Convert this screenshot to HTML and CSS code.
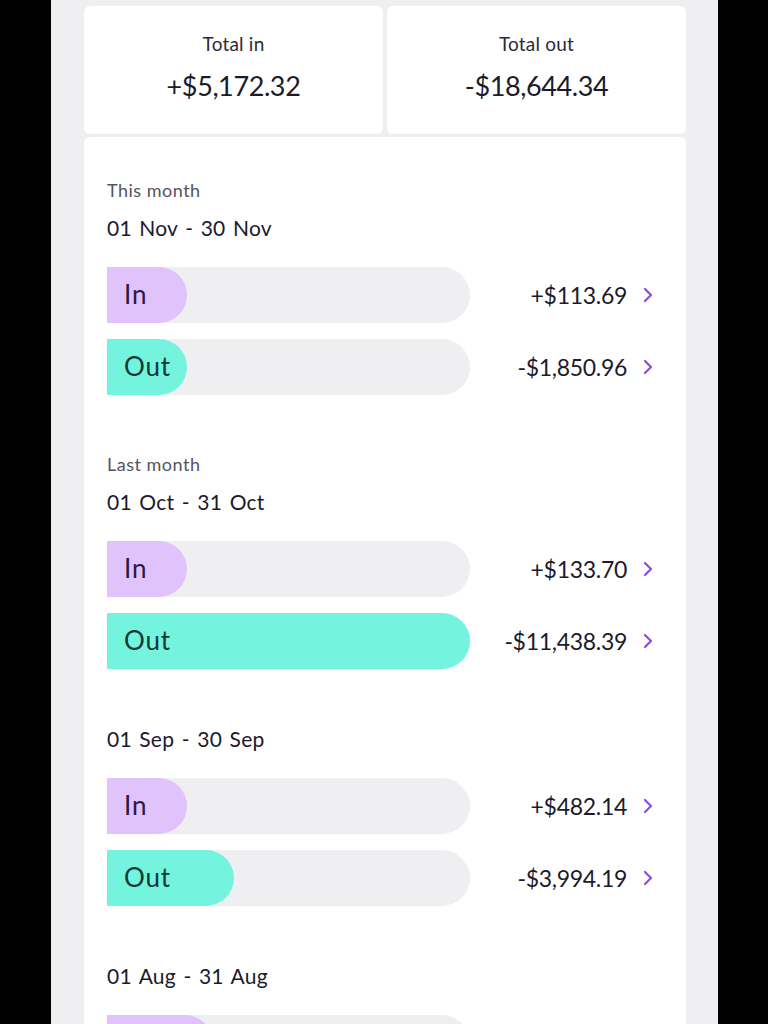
FILE: index.html
```html
<!DOCTYPE html>
<html lang="en">
<head>
  <meta charset="UTF-8">
  <meta name="viewport" content="width=device-width, initial-scale=1.0">
  <title>Money in and out</title>
  <link rel="stylesheet" href="styles.css">
</head>
<body>
  <div class="screen">
    <div class="totals">
      <div class="total-card">
        <p class="total-label">Total in</p>
        <p class="total-amount">+$5,172.32</p>
      </div>
      <div class="total-card">
        <p class="total-label">Total out</p>
        <p class="total-amount">-$18,644.34</p>
      </div>
    </div>

    <div class="months">
      <!-- November -->
      <div class="month">
        <p class="month-label">This month</p>
        <p class="month-dates">01 Nov - 30 Nov</p>
        <div class="flow-row">
          <div class="track"><div class="fill fill-in" style="width: 80px">In</div></div>
          <span class="amount">+$113.69</span>
          <svg class="chevron" viewBox="0 0 10 16"><path d="M2 2l6 6-6 6"/></svg>
        </div>
        <div class="flow-row">
          <div class="track"><div class="fill fill-out" style="width: 80px">Out</div></div>
          <span class="amount">-$1,850.96</span>
          <svg class="chevron" viewBox="0 0 10 16"><path d="M2 2l6 6-6 6"/></svg>
        </div>
      </div>

      <!-- October -->
      <div class="month">
        <p class="month-label">Last month</p>
        <p class="month-dates">01 Oct - 31 Oct</p>
        <div class="flow-row">
          <div class="track"><div class="fill fill-in" style="width: 80px">In</div></div>
          <span class="amount">+$133.70</span>
          <svg class="chevron" viewBox="0 0 10 16"><path d="M2 2l6 6-6 6"/></svg>
        </div>
        <div class="flow-row">
          <div class="track"><div class="fill fill-out" style="width: 100%">Out</div></div>
          <span class="amount">-$11,438.39</span>
          <svg class="chevron" viewBox="0 0 10 16"><path d="M2 2l6 6-6 6"/></svg>
        </div>
      </div>

      <!-- September -->
      <div class="month">
        <p class="month-dates">01 Sep - 30 Sep</p>
        <div class="flow-row">
          <div class="track"><div class="fill fill-in" style="width: 80px">In</div></div>
          <span class="amount">+$482.14</span>
          <svg class="chevron" viewBox="0 0 10 16"><path d="M2 2l6 6-6 6"/></svg>
        </div>
        <div class="flow-row">
          <div class="track"><div class="fill fill-out" style="width: 127px">Out</div></div>
          <span class="amount">-$3,994.19</span>
          <svg class="chevron" viewBox="0 0 10 16"><path d="M2 2l6 6-6 6"/></svg>
        </div>
      </div>

      <!-- August -->
      <div class="month">
        <p class="month-dates">01 Aug - 31 Aug</p>
        <div class="flow-row">
          <div class="track"><div class="fill fill-in" style="width: 106px"></div></div>
          <span class="amount"></span>
        </div>
      </div>
    </div>
  </div>
</body>
</html>
```

FILE: styles.css
```css
html, body {
  margin: 0;
  height: 100%;
  overflow: hidden;
}
body {
  background: #000;
  font-family: Lato, "Noto Sans", sans-serif;
  color: #1c1a2c;
}
p {
  margin: 0;
}
.screen {
  width: 667px;
  height: 100%;
  margin-left: 51px;
  background: #efeff2;
  padding: 6px 32px 0 33px;
  box-sizing: border-box;
}
.totals {
  display: grid;
  grid-template-columns: 299px 1fr;
  gap: 4px;
}
.total-card {
  background: #fff;
  border-radius: 6px;
  height: 128px;
  display: flex;
  flex-direction: column;
  align-items: center;
  padding-top: 25px;
  box-sizing: border-box;
}
.total-label {
  font-size: 19px;
  line-height: 26px;
  color: #2b2a35;
  letter-spacing: 0.2px;
}
.total-amount {
  font-size: 27px;
  line-height: 34px;
  margin-top: 12px;
  letter-spacing: -0.4px;
}
.months {
  background: #fff;
  border-radius: 6px 6px 0 0;
  margin-top: 3px;
  padding: 41px 33px 0 23px;
  height: 900px;
}
.month + .month {
  margin-top: 57px;
}
.month-label {
  font-size: 18px;
  line-height: 24px;
  color: #555460;
  letter-spacing: 0.5px;
  margin-bottom: 13px;
}
.month-dates {
  font-size: 21px;
  line-height: 26px;
  word-spacing: 2px;
  letter-spacing: 0.2px;
  margin-bottom: 26px;
}
.flow-row {
  display: flex;
  align-items: center;
  height: 56px;
}
.flow-row + .flow-row {
  margin-top: 16px;
}
.track {
  width: 363px;
  height: 56px;
  background: #efeff1;
  border-radius: 0 28px 28px 0;
}
.fill {
  height: 100%;
  border-radius: 0 28px 28px 0;
  box-sizing: border-box;
  padding-left: 17px;
  font-size: 26px;
  line-height: 54px;
  letter-spacing: 0.8px;
}
.fill-in {
  background: #dfc3fa;
  color: #2c1849;
}
.fill-out {
  background: #74f3de;
  color: #0f3a36;
}
.amount {
  flex: 1;
  text-align: right;
  font-size: 23px;
  letter-spacing: -0.3px;
}
.chevron {
  width: 10px;
  height: 16px;
  margin-left: 16px;
  fill: none;
  stroke: #8a4fd8;
  stroke-width: 2.2;
  stroke-linecap: round;
  stroke-linejoin: round;
}
```
